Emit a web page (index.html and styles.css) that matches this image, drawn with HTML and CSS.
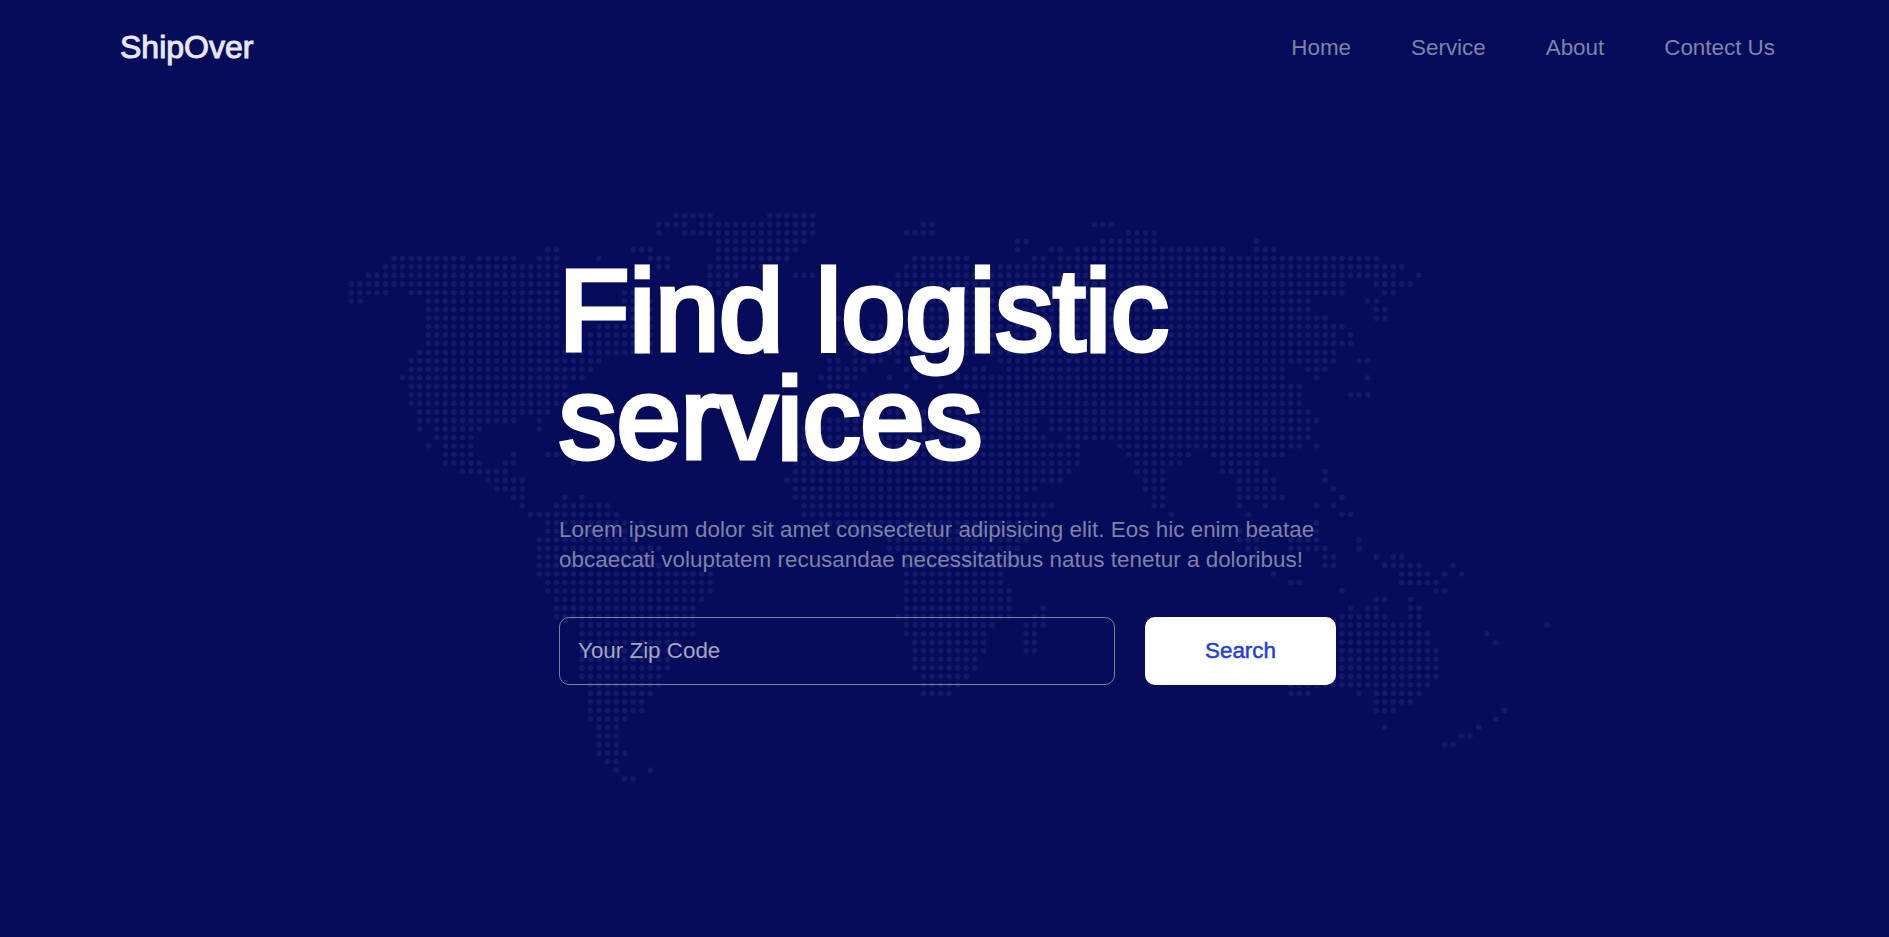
FILE: index.html

```html
<!DOCTYPE html>
<html lang="en">
<head>
  <meta charset="UTF-8">
  <title>ShipOver</title>
  <link rel="stylesheet" href="styles.css">
</head>
<body>
  <svg class="world-map" id="worldMap" width="1889" height="937" aria-hidden="true">
    <path id="mapDots"></path>
  </svg>
  <header class="site-header">
    <a class="logo" href="#">ShipOver</a>
    <nav class="site-nav">
      <a href="#">Home</a>
      <a href="#">Service</a>
      <a href="#">About</a>
      <a href="#">Contect Us</a>
    </nav>
  </header>
  <main class="hero">
    <h1>Find logistic<br>services</h1>
    <p>Lorem ipsum dolor sit amet consectetur adipisicing elit. Eos hic enim beatae obcaecati voluptatem recusandae necessitatibus natus tenetur a doloribus!</p>
    <form class="search">
      <input type="text" placeholder="Your Zip Code">
      <button type="button">Search</button>
    </form>
  </main>
  <script src="map.js"></script>
</body>
</html>
```

FILE: styles.css

```css
* {
  box-sizing: border-box;
}
body {
  position: relative;
  margin: 0;
  min-height: 937px;
  overflow: hidden;
  font-family: "Liberation Sans", Arial, sans-serif;
  background-color: #060c5a;
}
.world-map {
  position: absolute;
  top: 0;
  left: 0;
}
.world-map path {
  fill: none;
  stroke: #141a69;
  stroke-width: 5.6;
  stroke-linecap: round;
}
.site-header {
  position: relative;
  display: flex;
  justify-content: space-between;
  align-items: center;
  height: 95px;
  padding: 0 114px 0 120px;
}
.logo {
  font-size: 32px;
  -webkit-text-stroke: 1px #e6e7f2;
  color: #e6e7f2;
  text-decoration: none;
}
.site-nav {
  display: flex;
  gap: 60px;
}
.site-nav a {
  font-size: 22.4px;
  color: #8082aa;
  text-decoration: none;
}
.hero {
  position: relative;
  width: 777px;
  margin: 161px 0 0 559px;
}
.hero h1 {
  margin: 0;
  font-size: 115px;
  line-height: 108px;
  font-weight: normal;
  letter-spacing: 0.2px;
  -webkit-text-stroke: 5px #ffffff;
  color: #ffffff;
}
.hero p {
  margin: 43px 0 42px;
  font-size: 22.4px;
  line-height: 30px;
  letter-spacing: 0.03px;
  color: #7f81a8;
}
.search {
  display: flex;
  gap: 30px;
}
.search input {
  flex: 1;
  height: 68px;
  padding: 0 18px;
  font-family: inherit;
  font-size: 22.4px;
  color: #ffffff;
  background: none;
  border: 1px solid #7d7f9f;
  border-radius: 10px;
}
.search input::placeholder {
  color: #a3a5c0;
  opacity: 1;
}
.search button {
  width: 191px;
  height: 68px;
  font-family: inherit;
  font-size: 22.4px;
  -webkit-text-stroke: 0.5px #1f3fe0;
  color: #1f3fe0;
  background-color: #ffffff;
  border: none;
  border-radius: 10px;
  cursor: pointer;
}
```

FILE: map.js

```js
// dotted world map, one string per row, columns given as "from-to" runs
const mapRows = [
  "38-42 49-54",
  "36-39 41-54 67-68 87-89",
  "36 39-54 65-68 91-94",
  "43-53 78-79 88-94 106",
  "23-24 33-35 43-52 78 82-83 85-102 106-108",
  "5-13 15-19 22-24 29 35-37 43-51 66-72 80-81 83-120",
  "4-24 36-37 42-48 65-72 76-123",
  "2-24 42-45 52-54 64-122 125",
  "0-24 42-44 62-116 120-124",
  "0-4 7-24 32-33 43 64 66-116 121-122",
  "0-1 9-24 32-35 66-112 119-120",
  "9-24 32-35 66-112 120-121",
  "9-24 33-35 57 66-114 120-121",
  "9-24 29-35 61-64 66-116",
  "9-24 28-35 58 61-115 117",
  "9-24 28-35 58-117",
  "8-35 59-115",
  "7-29 56-57 59-62 64 76-115 118-119",
  "7-28 56-60 65 73-74 77-109 112-114",
  "6-27 55-59 63 66 71-109 113 119",
  "7-25 56-58 65 69 72-111",
  "7-25 59-64 70 75-111 117-119",
  "7-25 59-64 75-111",
  "8-23 60-112",
  "8-19 22 56-80 82-113",
  "8 10-15 22 53-80 82-112",
  "10-14 53-81 84-112",
  "9 11-14 52-85 90-111 113",
  "11-14 19 23-24 52-85 91-98 101-109",
  "11-15 18-19 26 52-85 92-97 102-106",
  "13-18 52-84 92-95 102-107 114",
  "16-20 51-83 93-95 104-108 114",
  "17-20 52-80 93-95 104-108 115",
  "19-20 25 27 52-78 94-95 104-109 116",
  "20 24-30 53-82 94-95 104 107 113 115",
  "21-31 53-81 96 105 116-117",
  "23-34 55-79 113",
  "23-32 59-79 104 113",
  "22-33 63-79 104-106 110-113 118",
  "22-36 63-78 105-106 110-114 118",
  "22-35 65-78 106 114-115 120 122-123",
  "22-36 65-78 106 114-115 121-125 129",
  "22-42 65-76 108 123-126 128 130",
  "23-42 65-76 110-111 123-127",
  "23-42 65-77 116 127-128",
  "24-41 65-77 120-121 124",
  "24-40 65-77 81 117 119-120 124-125",
  "24-40 64-77 80-81 116-121 124-125",
  "27-40 65-75 79-81 116-125 140",
  "27-40 65-74 79-80 116-126 133",
  "27-38 66-74 79-80 116-126 134",
  "27-38 66-74 79-80 116-127",
  "27-37 66-73 116-127",
  "27-37 66-73 116-127",
  "27-36 67-72 116-127",
  "28-36 67-71 110-126",
  "28-35 67-70 110-112 118 120-125",
  "28-34 120-124",
  "28-34 120-122 135",
  "28-32 134",
  "29-31 121 132",
  "29-31 130-131",
  "29-31 128-129",
  "29-32",
  "30-31",
  "31 35",
  "32-33"
];

function drawMap() {
  let d = "";
  mapRows.forEach((row, r) => {
    const y = 215.7 + r * 8.53;
    row.split(" ").forEach(run => {
      const [from, to = from] = run.split("-").map(Number);
      for (let c = from; c <= to; c++) {
        d += "M" + (351.4 + c * 8.54).toFixed(1) + " " + y.toFixed(1) + "h.01";
      }
    });
  });
  document.getElementById("mapDots").setAttribute("d", d);
}

drawMap();
```
